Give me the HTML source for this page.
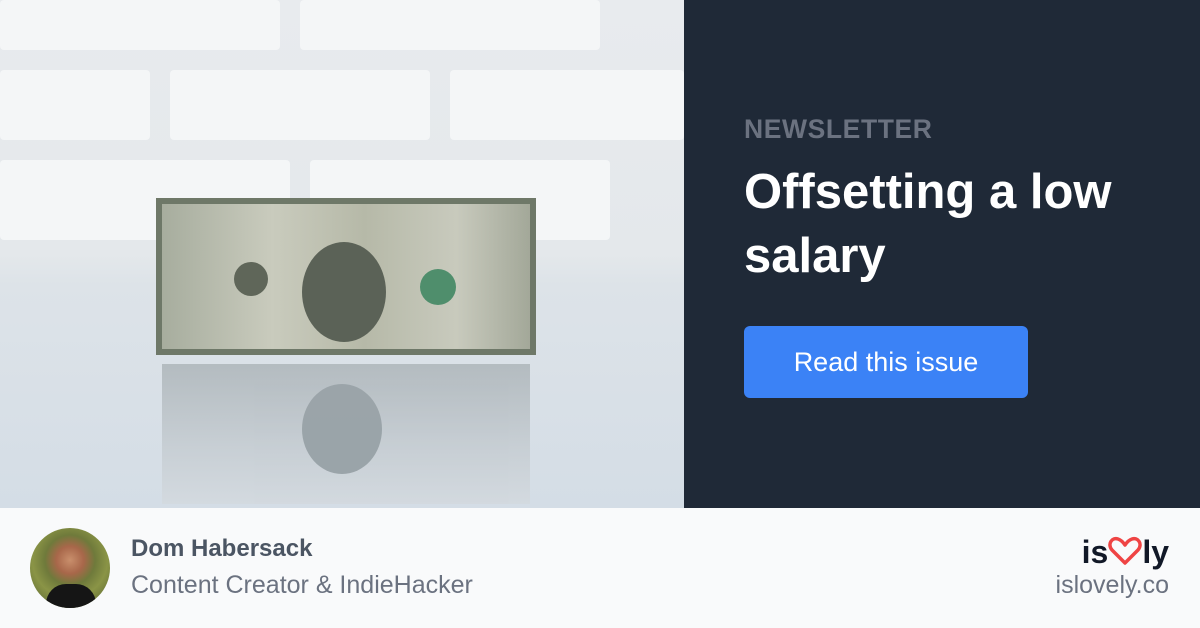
<!DOCTYPE html>
<html><head><style>
body{margin:0;width:1200px;height:628px;overflow:hidden;font-family:"Liberation Sans",sans-serif;position:relative;background:#f9fafb}
.photo{position:absolute;left:0;top:0;width:684px;height:508px;background:linear-gradient(180deg,#e8ebee 0%,#e4e8eb 50%,#dde3e8 56%,#d4dde6 100%);overflow:hidden}
.brick{position:absolute;background:#f4f6f7;border-radius:4px}
.bill{position:absolute;left:156px;top:198px;width:380px;height:157px;background:linear-gradient(90deg,#a7ad9e,#c9cbbd 30%,#b6b9a8 55%,#c8cabd 80%,#a3a899);border:6px solid #6e7868;box-sizing:border-box}
.bill .por{position:absolute;left:140px;top:38px;width:84px;height:100px;border-radius:50%;background:#5b6257}
.bill .seal{position:absolute;left:258px;top:65px;width:36px;height:36px;border-radius:50%;background:#4f8e6c}
.bill .seal2{position:absolute;left:72px;top:58px;width:34px;height:34px;border-radius:50%;background:#5f6659}
.refl{position:absolute;left:162px;top:364px;width:368px;height:140px;background:linear-gradient(180deg,#aab2b6,#c4cbd0 60%,#d3d9de);opacity:.8}
.refl .por{position:absolute;left:140px;top:20px;width:80px;height:90px;border-radius:50%;background:#8c969a}
.right{position:absolute;left:684px;top:0;width:516px;height:508px;background:#1f2937}
.nl{position:absolute;left:744px;top:114px;color:#6b7280;font-weight:bold;font-size:26.5px;letter-spacing:.6px}
.t{position:absolute;left:744px;top:160px;color:#fff;font-weight:bold;font-size:49px;line-height:64px;width:440px}
.btn{position:absolute;left:744px;top:326px;width:284px;height:72px;background:#3b82f6;border-radius:6px;color:#fff;font-size:27px;line-height:72px;text-align:center}
.av{position:absolute;left:30px;top:528px;width:80px;height:80px;border-radius:50%;background:radial-gradient(circle at 50% 40%,#c98f6c 0,#a8674a 22%,#6f7a3b 40%,#8a9446 60%,#4e5a2c 100%);overflow:hidden}
.av:after{content:"";position:absolute;left:16px;top:56px;width:50px;height:30px;background:#151515;border-radius:20px 20px 0 0}
.name{position:absolute;left:131px;top:535px;color:#4b5563;font-weight:bold;font-size:24px}
.role{position:absolute;left:131px;top:571px;color:#6b7280;font-size:25px}
.logo{position:absolute;right:31px;top:534px;font-weight:bold;font-size:32px;color:#111827}
.url{position:absolute;right:31px;top:571px;color:#6b7280;font-size:25px}
</style></head><body>
<div class="photo">
<div class="brick" style="left:0;top:0;width:280px;height:50px"></div>
<div class="brick" style="left:300px;top:0;width:300px;height:50px"></div>
<div class="brick" style="left:0;top:70px;width:150px;height:70px"></div>
<div class="brick" style="left:170px;top:70px;width:260px;height:70px"></div>
<div class="brick" style="left:450px;top:70px;width:234px;height:70px"></div>
<div class="brick" style="left:0;top:160px;width:290px;height:80px"></div>
<div class="brick" style="left:310px;top:160px;width:300px;height:80px"></div>
<div class="bill"><div class="por"></div><div class="seal"></div><div class="seal2"></div></div>
<div class="refl"><div class="por"></div></div>
</div>
<div class="right"></div>
<div class="nl">NEWSLETTER</div>
<div class="t">Offsetting a low salary</div>
<div class="btn">Read this issue</div>
<div class="av"></div>
<div class="name">Dom Habersack</div>
<div class="role">Content Creator &amp; IndieHacker</div>
<div class="logo">is<svg width="34" height="30" viewBox="0 0 34 30" style="vertical-align:-3px"><path d="M17 27 L4 14 C-1 8 4 1 10 3 C13 4 15 6 17 9 C19 6 21 4 24 3 C30 1 35 8 30 14 Z" fill="none" stroke="#ef4444" stroke-width="3.5" stroke-linejoin="round"/></svg>ly</div>
<div class="url">islovely.co</div>
</body></html>
